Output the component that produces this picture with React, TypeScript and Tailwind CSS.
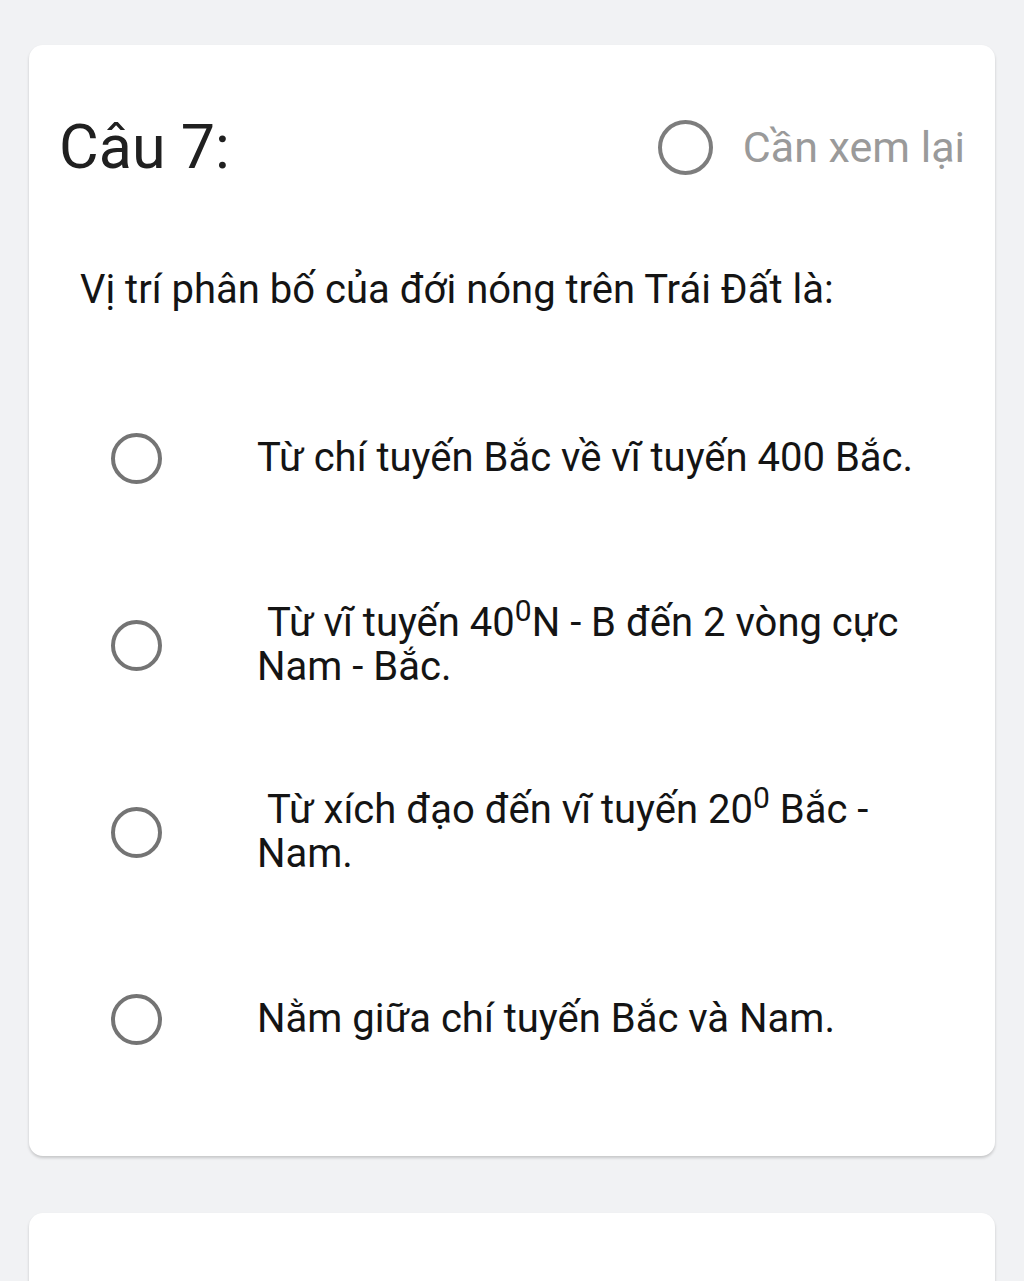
import type { ReactNode } from 'react';

interface OptionProps {
  children: ReactNode;
}

const Radio = ({ size = 'option' }: { size?: 'option' | 'flag' }) => (
  <span
    className={
      size === 'flag'
        ? 'block w-[55px] h-[55px] rounded-full border-[4px] border-[#7d7d7d] shrink-0'
        : 'block w-[51px] h-[51px] rounded-full border-[4px] border-[#747474] shrink-0'
    }
  />
);

const Option = ({ children }: OptionProps) => (
  <div className="flex items-center min-h-[88px] pl-[82px]">
    <Radio />
    <div className="ml-[95px] w-[680px] text-[40px] leading-[44px] text-[#141414]">
      {children}
    </div>
  </div>
);

const App = () => {
  return (
    <div
      className="h-[1281px] bg-[#f1f2f4] px-[29px] pt-[45px] overflow-hidden"
      style={{ fontFamily: 'Roboto, "Noto Sans", sans-serif' }}
    >
      {/* question card */}
      <section className="bg-white rounded-[14px] shadow-[0_2px_3px_rgba(0,0,0,0.18)] pt-[72px] pb-[93px]">
        <div className="flex items-center justify-between h-[60px] pl-[30px] pr-[30px]">
          <h2 className="text-[61px] leading-none text-[#202020]">Câu 7:</h2>
          <div className="flex items-center gap-[30px]">
            <Radio size="flag" />
            <span className="text-[43px] leading-none text-[#9a9a9a]">Cần xem lại</span>
          </div>
        </div>

        <p className="mt-[91px] pl-[51px] text-[40px] leading-[44px] text-[#141414]">
          Vị trí phân bố của đới nóng trên Trái Đất là:
        </p>

        <div className="mt-[102px] flex flex-col gap-[99px]">
          <Option>Từ chí tuyến Bắc về vĩ tuyến 400 Bắc.</Option>
          <Option>
            {'\u00a0'}Từ vĩ tuyến 40<sup>0</sup>N - B đến 2 vòng cực Nam - Bắc.
          </Option>
          <Option>
            {'\u00a0'}Từ xích đạo đến vĩ tuyến 20<sup>0</sup> Bắc - Nam.
          </Option>
          <Option>Nằm giữa chí tuyến Bắc và Nam.</Option>
        </div>
      </section>

      {/* next card, cut off by the bottom of the screen */}
      <section className="mt-[57px] h-[200px] bg-white rounded-[14px] shadow-[0_2px_3px_rgba(0,0,0,0.18)]" />
    </div>
  );
};

export default App;
